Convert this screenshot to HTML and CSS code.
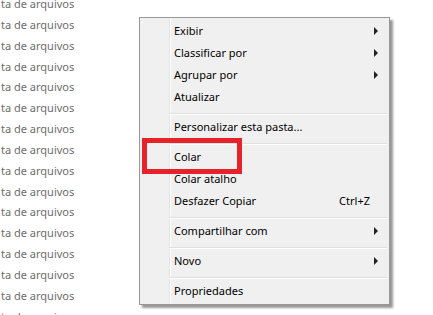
FILE: index.html
```html
<!DOCTYPE html>
<html lang="pt-BR">
<head>
    <meta charset="UTF-8">
    <title>Menu de contexto</title>
    <link rel="stylesheet" href="styles.css">
</head>
<body>
    <ul class="file-list">
        <li>ta de arquivos</li>
        <li>ta de arquivos</li>
        <li>ta de arquivos</li>
        <li>ta de arquivos</li>
        <li>ta de arquivos</li>
        <li>ta de arquivos</li>
        <li>ta de arquivos</li>
        <li>ta de arquivos</li>
        <li>ta de arquivos</li>
        <li>ta de arquivos</li>
        <li>ta de arquivos</li>
        <li>ta de arquivos</li>
        <li>ta de arquivos</li>
        <li>ta de arquivos</li>
        <li>ta de arquivos</li>
        <li>ta de arquivos</li>
    </ul>

    <div class="context-menu">
        <div class="menu-item has-sub">Exibir</div>
        <div class="menu-item has-sub">Classificar por</div>
        <div class="menu-item has-sub">Agrupar por</div>
        <div class="menu-item">Atualizar</div>
        <div class="menu-sep"></div>
        <div class="menu-item">Personalizar esta pasta...</div>
        <div class="menu-sep"></div>
        <div class="menu-item">Colar</div>
        <div class="menu-item">Colar atalho</div>
        <div class="menu-item">Desfazer Copiar <span class="shortcut">Ctrl+Z</span></div>
        <div class="menu-sep"></div>
        <div class="menu-item has-sub">Compartilhar com</div>
        <div class="menu-sep"></div>
        <div class="menu-item has-sub">Novo</div>
        <div class="menu-sep"></div>
        <div class="menu-item">Propriedades</div>
    </div>

    <!-- highlight drawn over the screenshot -->
    <div class="highlight"></div>
</body>
</html>
```

FILE: styles.css
```css
body {
    margin: 0;
    width: 433px;
    height: 315px;
    overflow: hidden;
    background: #fff;
    font-family: "Noto Sans", "Open Sans", sans-serif;
    font-size: 11px;
    position: relative;
}
.file-list {
    list-style: none;
    margin: -6px 0 0;
    padding: 0 0 0 1px;
    color: #6d6d6d;
    line-height: 20.85px;
}
.context-menu {
    position: absolute;
    left: 139px;
    top: 17px;
    width: 251px;
    box-sizing: border-box;
    padding: 2px;
    border: 1px solid #979797;
    background: linear-gradient(to right, #f0f0f0 29px, #e2e3e3 29px, #e2e3e3 30px, #fff 30px, #fff 31px, #f0f0f0 31px);
    box-shadow: 3px 3px 2px rgba(0, 0, 0, 0.4);
    color: #000;
}
.menu-item {
    position: relative;
    height: 22px;
    line-height: 22px;
    padding-left: 32px;
    white-space: nowrap;
}
.has-sub::after {
    content: "";
    position: absolute;
    right: 9px;
    top: 7px;
    border-left: 4px solid #222;
    border-top: 4px solid transparent;
    border-bottom: 4px solid transparent;
}
.shortcut {
    position: absolute;
    right: 17px;
}
.menu-sep {
    height: 0;
    margin: 5px 0 1px 27px;
    border-top: 1px solid #e0e0e0;
    border-bottom: 1px solid #fff;
}
.highlight {
    position: absolute;
    left: 142px;
    top: 138px;
    width: 100px;
    height: 36px;
    box-sizing: border-box;
    border: 5px solid #e8222a;
}
```
